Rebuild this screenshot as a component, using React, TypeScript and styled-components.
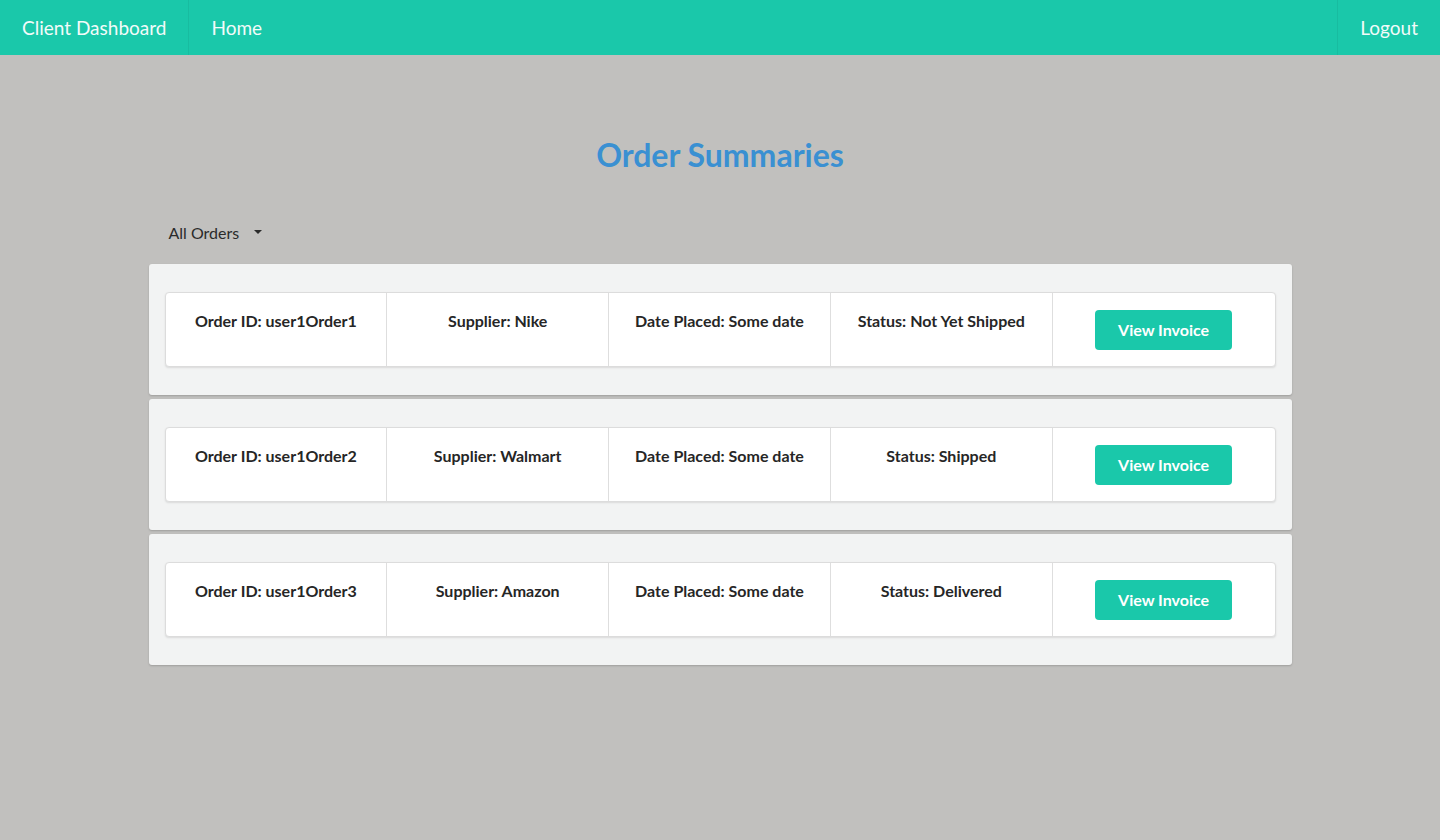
import { createGlobalStyle, styled } from "styled-components";

const orders = [
  { id: "user1Order1", supplier: "Nike", date: "Some date", status: "Not Yet Shipped" },
  { id: "user1Order2", supplier: "Walmart", date: "Some date", status: "Shipped" },
  { id: "user1Order3", supplier: "Amazon", date: "Some date", status: "Delivered" },
];

const App = () => {
  return (
    <>
      <GlobalStyle />
      <Page>
        <NavBar>
          <NavItem $divider="right">Client Dashboard</NavItem>
          <NavItem>Home</NavItem>
          <NavSpacer />
          <NavItem $divider="left">Logout</NavItem>
        </NavBar>

        <Main>
          <Title>Order Summaries</Title>
          <Dropdown>
            All Orders
            <Caret />
          </Dropdown>

          <OrderList>
            {orders.map((order) => (
              <OrderCard key={order.id}>
                <OrderRow>
                  <Cell>Order ID: {order.id}</Cell>
                  <Cell>Supplier: {order.supplier}</Cell>
                  <Cell>Date Placed: {order.date}</Cell>
                  <Cell>Status: {order.status}</Cell>
                  <ButtonCell>
                    <InvoiceButton>View Invoice</InvoiceButton>
                  </ButtonCell>
                </OrderRow>
              </OrderCard>
            ))}
          </OrderList>
        </Main>
      </Page>
    </>
  );
};

export default App;

const GlobalStyle = createGlobalStyle`
  html, body {
    margin: 0;
    padding: 0;
    background: #c1c0be;
    font-family: Lato, "Noto Sans", sans-serif;
  }
`;

const Page = styled("div")({
  minHeight: "840px",
  background: "#c1c0be",
});

const NavBar = styled("div")({
  display: "flex",
  alignItems: "stretch",
  height: "55px",
  background: "#1ac8aa",
});

const NavItem = styled("div")<{ $divider?: "left" | "right" }>((p) => ({
  display: "flex",
  alignItems: "center",
  padding: "0 22px",
  color: "#f2fbf9",
  fontSize: "19px",
  borderRight: p.$divider === "right" ? "1px solid rgba(0,0,0,0.06)" : "none",
  borderLeft: p.$divider === "left" ? "1px solid rgba(0,0,0,0.06)" : "none",
}));

const NavSpacer = styled("div")({
  flex: 1,
});

const Main = styled("div")({
  width: "1143px",
  margin: "0 auto",
  paddingTop: "80px",
});

const Title = styled("h1")({
  margin: 0,
  textAlign: "center",
  color: "#3a90d2",
  fontSize: "32px",
  fontWeight: 700,
  lineHeight: "40px",
});

const Dropdown = styled("div")({
  display: "flex",
  alignItems: "center",
  gap: "15px",
  marginTop: "45px",
  marginLeft: "20px",
  height: "24px",
  color: "#2b2b2b",
  fontSize: "16px",
});

const Caret = styled("span")({
  width: 0,
  height: 0,
  borderLeft: "4px solid transparent",
  borderRight: "4px solid transparent",
  borderTop: "4px solid #2b2b2b",
});

const OrderList = styled("div")({
  display: "flex",
  flexDirection: "column",
  gap: "4px",
  marginTop: "20px",
});

const OrderCard = styled("div")({
  background: "#f2f3f3",
  borderRadius: "3px",
  boxShadow: "0 1px 2px rgba(0,0,0,0.18)",
  padding: "28px 16px 28px",
});

const OrderRow = styled("div")({
  display: "grid",
  gridTemplateColumns: "repeat(5, 1fr)",
  height: "75px",
  background: "#ffffff",
  border: "1px solid #dcdcdc",
  borderRadius: "4px",
  boxShadow: "0 1px 2px rgba(0,0,0,0.1)",
  boxSizing: "border-box",
});

const Cell = styled("div")({
  padding: "18px 8px 0",
  textAlign: "center",
  color: "#262626",
  fontSize: "16px",
  fontWeight: 700,
  borderRight: "1px solid #dedede",
});

const ButtonCell = styled("div")({
  display: "flex",
  alignItems: "center",
  justifyContent: "center",
});

const InvoiceButton = styled("button")({
  width: "137px",
  height: "40px",
  border: "none",
  borderRadius: "4px",
  background: "#1ac8aa",
  color: "#ffffff",
  fontFamily: "Lato, sans-serif",
  fontSize: "16px",
  fontWeight: 700,
  cursor: "pointer",
});
